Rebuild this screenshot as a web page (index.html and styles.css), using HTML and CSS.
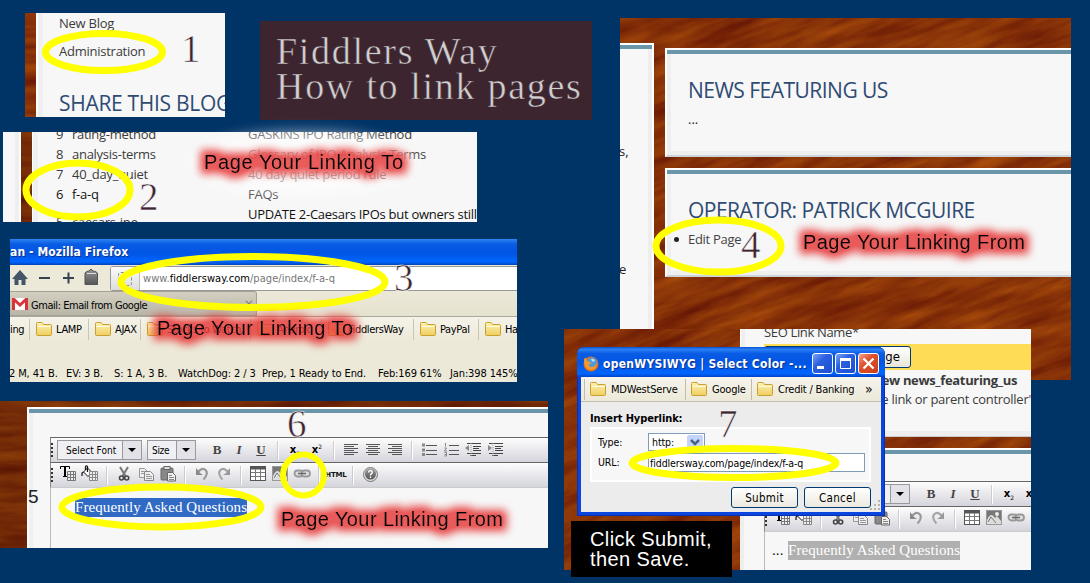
FILE: index.html
```html
<!DOCTYPE html>
<html lang="en">
<head>
<meta charset="utf-8">
<title>Fiddlers Way - How to link pages</title>
<link rel="stylesheet" href="styles.css">
</head>
<body>
<svg class="defs" width="0" height="0">
  <defs>
    <filter id="grain" x="0" y="0" width="100%" height="100%" color-interpolation-filters="sRGB">
      <feTurbulence type="fractalNoise" baseFrequency="0.014 0.08" numOctaves="5" seed="8" result="n"/>
      <feColorMatrix in="n" values="0.32 0 0 0 0.37  0.26 0 0 0 0.065  0.03 0 0 0 0.015  0 0 0 0 1"/>
    </filter>
    <filter id="glow" x="-15%" y="-120%" width="130%" height="340%" color-interpolation-filters="sRGB">
      <feMorphology in="SourceAlpha" operator="dilate" radius="5" result="d"/>
      <feGaussianBlur in="d" stdDeviation="4.2" result="b"/>
      <feComponentTransfer in="b" result="c"><feFuncA type="linear" slope="1.15"/></feComponentTransfer>
      <feFlood flood-color="#e63c3c" flood-opacity=".84"/>
      <feComposite in2="c" operator="in" result="g"/>
      <feMerge><feMergeNode in="g"/><feMergeNode in="SourceGraphic"/></feMerge>
    </filter>
    <filter id="halo" x="-30%" y="-100%" width="160%" height="300%"><feGaussianBlur stdDeviation="7"/></filter>
    <linearGradient id="fold" x1="0" y1="0" x2="0" y2="1"><stop offset="0" stop-color="#fdf3b4"/><stop offset="1" stop-color="#efce5e"/></linearGradient>
    <linearGradient id="grey" x1="0" y1="0" x2="0" y2="1"><stop offset="0" stop-color="#999"/><stop offset="1" stop-color="#555"/></linearGradient>
    <symbol id="folder" viewBox="0 0 16 14"><path d="M.5 12.500V1.500Q.5.5 1.500.5H6L7.500 2.500H14.500Q15.500 2.500 15.500 3.500V12.500Q15.500 13.500 14.500 13.500H1.500Q.5 13.500.5 12.500Z" fill="url(#fold)" stroke="#c9a031"/><path d="M1.500 4.500H14.500" stroke="#fffbe0"/></symbol>
    <symbol id="tgrid" viewBox="0 0 22 22"><path d="M3.500 5V2.500H12.500V5M6 12.500H10" fill="none" stroke="#000"/><path d="M8 2V12" stroke="#000" stroke-width="2"/><path d="M10.500 7.500H18.500V16.500H10.500ZM10.500 10.500H18.500M10.500 13.500H18.500M13.500 7.500V16.500M16.500 7.500V16.500" fill="#eee" stroke="#777"/></symbol>
    <symbol id="bucket" viewBox="0 0 22 22"><path d="M4.500 8L8.500 4L13 8.500L9 12.500Z" fill="#fff" stroke="#111"/><path d="M8.500 8V2.500Q7.500 1 6.500 2.500V6M4.500 8L3 9V12" fill="none" stroke="#111" stroke-width="1.200"/><path d="M10.500 7.500H18.500V16.500H10.500ZM10.500 10.500H18.500M10.500 13.500H18.500M13.500 7.500V16.500M16.500 7.500V16.500" fill="#eee" stroke="#888"/></symbol>
    <symbol id="cut" viewBox="0 0 22 22"><path d="M7 3L12.500 12M15 3L9.500 12" stroke="#777" stroke-width="2"/><circle cx="8.500" cy="14" r="2" fill="none" stroke="#444" stroke-width="1.600"/><circle cx="13.700" cy="14" r="2" fill="none" stroke="#444" stroke-width="1.600"/></symbol>
    <symbol id="copy" viewBox="0 0 22 22"><path d="M4.500 4.500H9.500L12.500 7.500V13.500H4.500Z" fill="#eee" stroke="#999"/><path d="M9.500 7.500H15.500L18.500 10.500V16.500H9.500Z" fill="#eee" stroke="#888"/><path d="M6 7.500H9M6 9.500H9M11 10.500H15M11 12.500H17M11 14.500H17" stroke="#999"/></symbol>
    <symbol id="paste" viewBox="0 0 22 22"><rect x="4" y="4" width="12" height="12" rx="1" fill="#888" stroke="#666"/><rect x="7" y="2.500" width="6" height="3" fill="#ddd" stroke="#666"/><path d="M10.500 8.500H15.500L18.500 11.500V17H10.500Z" fill="#eee" stroke="#666"/><path d="M12 11.500H15M12 13.500H17M12 15.500H17" stroke="#888"/></symbol>
    <symbol id="undo" viewBox="0 0 22 22"><path d="M6 9Q11 2.500 15 6.500Q17.500 10 12.500 15.500" fill="none" stroke="#999" stroke-width="2.200"/><path d="M5 4V11H12L9 9Z" fill="#888"/></symbol>
    <symbol id="redo" viewBox="0 0 22 22"><path d="M16 9Q11 2.500 7 6.500Q4.500 10 9.500 15.500" fill="none" stroke="#a5a5a5" stroke-width="2.200"/><path d="M17 4V11H10L13 9Z" fill="#999"/></symbol>
    <symbol id="table" viewBox="0 0 22 22"><rect x="3.500" y="2.500" width="15" height="14" fill="#fff" stroke="#555"/><path d="M4 4H18" stroke="#555" stroke-width="3"/><path d="M4 8.500H18M4 12.500H18M8.500 5V16M13.500 5V16" stroke="#777"/></symbol>
    <symbol id="image" viewBox="0 0 22 22"><rect x="3.500" y="2.500" width="15" height="14" fill="#777" stroke="#999"/><path d="M4 12Q8 3 12 10L14 8L18 13V16H4Z" fill="#ddd"/><circle cx="14" cy="6" r="2" fill="#eee"/><path d="M5 14L8 9L13 15" stroke="#777" fill="none"/></symbol>
    <symbol id="link" viewBox="0 0 22 22"><rect x="3.500" y="6.500" width="8.500" height="6" rx="3" fill="#ddd" stroke="#999" stroke-width="1.800"/><rect x="10.500" y="6.500" width="8.500" height="6" rx="3" fill="#ddd" stroke="#999" stroke-width="1.800"/><path d="M7 9.500H15" stroke="#666" stroke-width="1.500"/></symbol>
    <symbol id="help" viewBox="0 0 22 22"><circle cx="11.500" cy="10.500" r="7" fill="#ddd" stroke="#777"/><circle cx="11.500" cy="10" r="5.500" fill="url(#grey)"/><path d="M9.500 8.500Q9.800 6.500 11.500 6.600Q14 7 13 9.200Q11.500 10 11.500 11.500M11.500 12.500V14" fill="none" stroke="#fff" stroke-width="1.500"/></symbol>
    <symbol id="left" viewBox="0 0 22 22"><path d="M4 5.500H18M4 7.500H14M4 9.500H18M4 11.500H14M4 13.500H18M4 15.500H14" stroke="#555"/></symbol>
    <symbol id="center" viewBox="0 0 22 22"><path d="M4 5.500H18M6 7.500H16M4 9.500H18M6 11.500H16M4 13.500H18M6 15.500H16" stroke="#555"/></symbol>
    <symbol id="right" viewBox="0 0 22 22"><path d="M4 5.500H18M8 7.500H18M4 9.500H18M8 11.500H18M4 13.500H18M8 15.500H18" stroke="#555"/></symbol>
    <symbol id="ul" viewBox="0 0 22 22"><path d="M8 6.500H19M8 11.500H19M8 15.500H19" stroke="#555"/><path d="M4 4.500H7V7.500H4ZM4 9.500H7V12.500H4ZM4 14H7V17H4Z" fill="#888"/></symbol>
    <symbol id="ol" viewBox="0 0 22 22"><path d="M9 6.500H19M9 11.500H19M9 15.500H19" stroke="#555"/><path d="M5.500 4V7.500M4.500 9H6.500L4.500 12H7M4.500 13.500H6.500V17H4.500M4.500 15.500H6.500" stroke="#888" fill="none"/></symbol>
    <symbol id="outdent" viewBox="0 0 22 22"><path d="M5 4.500H19M11 7.500H19M11 9.500H17M11 11.500H19M5 14.500H19M8 16.500H14" stroke="#444"/><path d="M9 4V17" stroke="#999" stroke-dasharray="1 1"/><path d="M7 6V12L3 9Z" fill="#888"/></symbol>
    <symbol id="indent" viewBox="0 0 22 22"><path d="M5 4.500H19M11 7.500H19M11 9.500H17M11 11.500H19M5 14.500H19M8 16.500H14" stroke="#444"/><path d="M9 4V17" stroke="#999" stroke-dasharray="1 1"/><path d="M4 6V12L8 9Z" fill="#888"/></symbol>
  </defs>
</svg>

<main class="canvas">
  <section class="clip clip-panels">
    <svg class="wood"><rect x="-250" y="-220" width="1000" height="900" transform="rotate(-20 200 200)" filter="url(#grain)"/></svg>
    <div class="col-left"><p>s,</p><p>e</p></div>
    <div class="col-right">
      <div class="panel box"><h2>NEWS FEATURING US</h2><p>...</p></div>
      <div class="panel box"><h2>OPERATOR: PATRICK MCGUIRE</h2><p class="item">Edit Page</p></div>
    </div>
  </section>

  <section class="clip clip-blog">
    <svg class="wood"><rect x="-300" y="-100" width="700" height="400" filter="url(#grain)"/></svg>
    <div class="blog-panel">
      <p>New Blog</p>
      <p>Administration</p>
      <h2>SHARE THIS BLOG</h2>
    </div>
  </section>

  <header class="title">Fiddlers Way<br>How to link pages</header>

  <section class="clip clip-list">
    <svg class="wood dim"><rect x="-60" y="-300" width="500" height="500" filter="url(#grain)"/></svg>
    <div class="edge"></div>
    <div class="list-panel">
      <ol class="slugs">
        <li><b>9</b>rating-method</li>
        <li><b>8</b>analysis-terms</li>
        <li><b>7</b>40_day_quiet</li>
        <li class="dark"><b>6</b>f-a-q</li>
        <li class="low"><b>5</b>caesars-ipo</li>
      </ol>
      <ul class="names">
        <li>GASKINS IPO Rating Method</li>
        <li>Glossary of IPO Analysis Terms</li>
        <li>40 day quiet period rule</li>
        <li>FAQs</li>
        <li class="dark">UPDATE 2-Caesars IPOs but owners still</li>
      </ul>
    </div>
  </section>

  <section class="clip clip-browser">
    <div class="ff-title">an - Mozilla Firefox</div>
    <div class="ff-nav">
      <svg width="100" height="26"><path d="M2 14L10 5L18 14H15.500V20H11.500V15H8.500V20H4.500V14Z" fill="#445566"/><path d="M29 13H40M53 13H64M58.500 7.500V18.500" stroke="#34434f" stroke-width="2"/><path d="M75 8Q76 6 79 6L81 4L83 6Q86 6 87.500 8V19.500H75Z" fill="url(#grey)" stroke="#555"/><path d="M77 8.500H86" stroke="#ddd"/></svg>
      <div class="ff-url"><span class="ff-id"><i></i></span><span class="ff-addr">www.<b>fiddlersway.com</b>/page/index/f-a-q</span></div>
    </div>
    <div class="ff-tabs"><div class="ff-tab">
      <svg width="16" height="12"><rect width="16" height="12" rx="1" fill="#fff"/><path d="M1.500 12V1L8 7L14.500 1V12" fill="none" stroke="#d9343a" stroke-width="3"/></svg>
      <span>Gmail: Email from Google</span><em>×</em></div></div>
    <div class="ff-marks">
      <span>ing</span>
      <span><svg><use href="#folder"/></svg>LAMP</span>
      <span><svg><use href="#folder"/></svg>AJAX</span>
      <span><svg><use href="#folder"/></svg>Stocks to Watch</span>
      <span><svg><use href="#folder"/></svg>Android</span>
      <span><svg><use href="#folder"/></svg>FiddlersWay</span>
      <span><svg><use href="#folder"/></svg>PayPal</span>
      <span><svg><use href="#folder"/></svg>Ha</span>
    </div>
    <div class="ff-status"><span>2 M, 41 B.</span><span>EV: 3 B.</span><span>S: 1 A, 3 B.</span><span>WatchDog: 2 / 3</span><span>Prep, 1 Ready to End.</span><span>Feb:169 61%</span><span>Jan:398 145%</span></div>
  </section>

  <section class="clip clip-editor">
    <svg class="wood dim"><rect x="-100" y="-40" width="700" height="300" filter="url(#grain)"/></svg>
    <div class="panel editor-panel">
      <div class="editor">
        <div class="bar">
          <i class="grip"></i>
          <span class="pick pick-font">Select Font<i></i></span><span class="pick pick-size">Size<i></i></span>
          <b class="fmt">B</b><b class="fmt it">I</b><b class="fmt un">U</b><i class="sep"></i>
          <b class="sx">x<sub>2</sub></b><b class="sx">x<sup>2</sup></b><i class="sep"></i>
          <svg><use href="#left"/></svg><svg><use href="#center"/></svg><svg><use href="#right"/></svg><i class="sep"></i>
          <svg><use href="#ul"/></svg><svg><use href="#ol"/></svg><svg><use href="#outdent"/></svg><svg><use href="#indent"/></svg>
        </div>
        <div class="bar">
          <i class="grip"></i>
          <svg><use href="#tgrid"/></svg><svg><use href="#bucket"/></svg><i class="sep"></i>
          <svg><use href="#cut"/></svg><svg><use href="#copy"/></svg><svg><use href="#paste"/></svg><i class="sep"></i>
          <svg><use href="#undo"/></svg><svg><use href="#redo"/></svg><i class="sep"></i>
          <svg><use href="#table"/></svg><svg><use href="#image"/></svg><svg><use href="#link"/></svg><i class="sep"></i>
          <b class="html">HTML</b><i class="sep"></i><svg><use href="#help"/></svg>
        </div>
        <p class="doc"><mark class="on">Frequently Asked Questions</mark></p>
      </div>
    </div>
  </section>

  <section class="clip clip-save">
    <svg class="wood"><rect x="-300" y="-260" width="1000" height="900" transform="rotate(-24 200 200)" filter="url(#grain)"/></svg>
    <div class="save-col">
      <div class="save-top">
        <p class="seo">SEO Link Name*</p>
        <div class="yellow"><span>Save Page</span></div>
        <p class="news">view news_featuring_us</p>
        <p class="ctl">the link or parent controller<q>'</q></p>
      </div>
      <div class="panel save-bottom">
        <div class="editor">
          <div class="bar">
            <i class="grip"></i>
            <span class="pick pick-font">Select Font<i></i></span><span class="pick pick-size">Size<i></i></span>
            <b class="fmt">B</b><b class="fmt it">I</b><b class="fmt un">U</b><i class="sep"></i>
            <b class="sx">x<sub>2</sub></b><b class="sx">x<sup>2</sup></b>
          </div>
          <div class="bar">
            <i class="grip"></i>
            <svg><use href="#tgrid"/></svg><svg><use href="#bucket"/></svg><i class="sep"></i>
            <svg><use href="#cut"/></svg><svg><use href="#copy"/></svg><svg><use href="#paste"/></svg><i class="sep"></i>
            <svg><use href="#undo"/></svg><svg><use href="#redo"/></svg><i class="sep"></i>
            <svg><use href="#table"/></svg><svg><use href="#image"/></svg><svg><use href="#link"/></svg>
          </div>
          <p class="doc faded"><span>...</span><mark>Frequently Asked Questions</mark></p>
        </div>
      </div>
    </div>
  </section>

  <section class="dialog">
    <div class="dlg-title">
      <svg width="16" height="16"><circle cx="8" cy="8" r="7.500" fill="#e2701c"/><circle cx="9" cy="6.500" r="5" fill="#4b9be0"/><path d="M1 3Q1 15 9 14Q14 13 13.500 7Q12 11 8 11Q5 10 6 8L8.500 7.500Q7 5 4.500 5.500Q3 4 3 1.500Z" fill="#f39a2c"/><path d="M8 3Q11 2 12 5Q10 6 9 5Z" fill="#bfe2fa"/></svg>
      <span>openWYSIWYG | Select Color -...</span>
      <i class="wb"><svg width="19" height="19"><path d="M4 13.500H11" stroke="#fff" stroke-width="3"/></svg></i>
      <i class="wb"><svg width="19" height="19"><path d="M4.500 6H14.500V14.500H4.500Z" fill="none" stroke="#fff"/><path d="M4 5.500H15" stroke="#fff" stroke-width="3"/></svg></i>
      <i class="wb close"><svg width="19" height="19"><path d="M4.500 4.500L14.500 14.500M14.500 4.500L4.500 14.500" stroke="#fff" stroke-width="2.300"/></svg></i>
    </div>
    <div class="dlg-marks">
      <span><svg><use href="#folder"/></svg>MDWestServe</span>
      <span><svg><use href="#folder"/></svg>Google</span>
      <span><svg><use href="#folder"/></svg>Credit / Banking</span>
      <em>»</em>
    </div>
    <div class="dlg-body">
      <h3>Insert Hyperlink:</h3>
      <div class="fields">
        <label>Type:</label><span class="select">http:<i><svg width="14" height="14"><path d="M3 5L7 9L11 5" fill="none" stroke="#4d6185" stroke-width="2.500"/></svg></i></span>
        <label>URL:</label><span class="input">fiddlersway.com/page/index/f-a-q</span>
      </div>
      <div class="buttons"><span>Submit</span><span>Cancel</span></div>
    </div>
    <svg class="size-grip" width="12" height="12"><path d="M9 1H11M5 5H7M9 5H11M1 9H3M5 9H7M9 9H11" stroke="#b8b4a2" stroke-width="2"/></svg>
  </section>

  <div class="note">Click Submit,<br>then Save.</div>

  <svg class="marks" width="1090" height="583">
    <ellipse cx="303" cy="163" rx="112" ry="31" fill="#fff" opacity=".6" filter="url(#halo)"/>
    <g fill="none" stroke="#ff0" stroke-width="7">
      <ellipse cx="104" cy="52" rx="58.500" ry="18.500"/>
      <ellipse cx="78" cy="190" rx="52" ry="27"/>
      <ellipse cx="253" cy="282" rx="132" ry="25.500"/>
      <ellipse cx="718.500" cy="246" rx="62.500" ry="26"/>
      <ellipse cx="161.500" cy="507" rx="99.500" ry="20"/>
      <circle cx="303.500" cy="475" r="20.500" stroke-width="6"/>
      <ellipse cx="734" cy="463" rx="102" ry="14.500"/>
    </g>
    <g class="digits">
      <text x="181" y="62">1</text><text x="139" y="210">2</text><text x="394" y="291">3</text><text x="741" y="258">4</text><text x="287" y="437">6</text><text x="718" y="437">7</text>
    </g>
    <g class="labels">
      <text class="plain" x="28" y="503" textLength="12">5</text>
      <text x="204" y="169" textLength="199" filter="url(#glow)">Page Your Linking To</text>
      <text x="157" y="335" textLength="196" filter="url(#glow)">Page Your Linking To</text>
      <text x="281" y="526" textLength="222" filter="url(#glow)">Page Your Linking From</text>
      <text x="803" y="249" textLength="222" filter="url(#glow)">Page Your Linking From</text>
    </g>
  </svg>
</main>
</body>
</html>
```
FILE: styles.css
```css
* { box-sizing: border-box; }
body, p, h2, h3, ol, ul { margin: 0; padding: 0; }
ol, ul { list-style: none; }
i, em { font-style: normal; }
.defs { position: absolute; }

.canvas {
  position: relative;
  width: 1090px;
  height: 583px;
  overflow: hidden;
  background: #003366;
  font-family: "Open Sans", "Noto Sans", sans-serif;
  font-size: 13px;
  color: #3b3b3b;
}
.clip { position: absolute; overflow: hidden; background: #7a2a08; }
.wood { position: absolute; left: 0; top: 0; width: 100%; height: 100%; }
.dim { filter: brightness(.85); }
.clip > div { position: relative; }
h2 { font-weight: 400; font-size: 21px; line-height: 28px; letter-spacing: -.52px; color: #2f4b73; white-space: nowrap; }

.panel {
  background: #f7f7f7;
  border: solid #fff;
  border-width: 2px 0 1px 2px;
}
.panel::before { content: ""; display: block; height: 4px; background: #6b96aa; }

/* blog menu */
.clip-blog { left: 25px; top: 13px; width: 200px; height: 104px; }
.blog-panel { margin-left: 11px; height: 104px; padding-left: 21px; border-left: 2px solid #fff; background: #f7f7f7; box-shadow: inset 5px 0 #f0f0f0; }
.blog-panel p { line-height: 28px; letter-spacing: -.25px; }
.blog-panel p:first-child { line-height: 20px; height: 24px; }
.blog-panel h2 { margin-top: 24px; letter-spacing: -.3px; }

.title {
  position: absolute; left: 260px; top: 21px; width: 332px; height: 99px;
  padding: 13px 0 0 16px;
  background: #3d2530; color: #d0d0d0;
  font: 38px/35px "Liberation Serif", serif;
  letter-spacing: 1.7px; white-space: nowrap;
  -webkit-text-stroke: .5px #3d2530;
}

/* page list */
.clip-list { left: 3px; top: 132px; width: 474px; height: 90px; display: flex; }
.edge { width: 18px; background: #f7f7f7; border-right: 2px solid #fff; box-shadow: inset -4px 0 #eee; }
.list-panel { margin-left: 11px; flex: 1; display: flex; height: 90px; padding-left: 23px; border-left: 1px solid #fff; background: #f7f7f7; box-shadow: inset 5px 0 #f0f0f0; }
.list-panel ol, .list-panel ul { margin-top: -8px; }
.list-panel li { height: 20px; line-height: 20px; white-space: nowrap; letter-spacing: -.27px; }
.list-panel b { display: inline-block; width: 16px; font-weight: 400; }
.slugs { width: 192px; }
.low { padding-top: 8px; }
.list-panel .dark { color: #111; }

/* browser window */
.clip-browser { left: 10px; top: 239px; width: 507px; height: 143px; background: #ece9d8; font: 11px "DejaVu Sans Condensed", "DejaVu Sans", sans-serif; color: #000; white-space: nowrap; }
.ff-title { height: 26px; line-height: 27px; background: linear-gradient(#2a86f0, #0a5be4 20%, #0055e5 55%, #0066ff 88%, #0042b8); color: #fff; font-weight: 700; font-size: 12px; letter-spacing: .1px; text-shadow: 1px 1px #0b2f8a; }
.ff-nav { display: flex; height: 26px; }
.ff-url { flex: 1; display: flex; height: 25px; margin-top: 1px; border: 1px solid #999; border-right: 0; border-radius: 3px 0 0 3px; background: #fff; }
.ff-id { width: 29px; border-right: 1px solid #bbb; background: linear-gradient(#fbfbfb, #ddd); padding: 5px 0 0 7px; }
.ff-id i { display: block; width: 14px; height: 14px; border: 1px dashed #888; border-radius: 3px; }
.ff-addr { margin-left: 3px; line-height: 24px; color: #777; letter-spacing: .05px; }
.ff-addr b { font-weight: 400; color: #000; }
.ff-tabs { height: 26px; border-bottom: 1px solid #aca899; background: linear-gradient(#ece9d8, #e6e2d0); }
.ff-tab { display: flex; align-items: center; gap: 3px; width: 247px; height: 25px; padding-left: 2px; border: 1px solid #a5a294; border-left: 0; border-radius: 0 3px 0 0; background: linear-gradient(#d3d0c2, #b9b6a8); letter-spacing: -.45px; }
.ff-tab span { width: 210px; padding-top: 3px; }
.ff-tab em { color: #777; font-size: 13px; }
.ff-marks { display: grid; grid-template-columns: 19px 59px 52px 110px 71px 92px 65px 50px; height: 24px; background: linear-gradient(#f5f3e9, #ece9d8); align-items: center; letter-spacing: -.35px; }
.ff-marks span { display: flex; align-items: center; gap: 4px; height: 21px; }
.ff-marks span + span { padding-left: 6px; border-left: 1px solid #c8c5b4; }
.ff-marks svg, .dlg-marks svg { width: 16px; height: 14px; flex: none; }
.ff-status { display: grid; grid-template-columns: 57px 48px 64px 84px 116px 72px 80px; margin-top: 25px; line-height: 16px; letter-spacing: -.12px; margin-left: -1px; }

/* editor */
.clip-editor { left: 0; top: 401px; width: 548px; height: 147px; padding: 6px 0 0 27px; }
.editor-panel { height: 150px; padding-left: 21px; box-shadow: inset 4px 0 #f0f0f0; }
.editor-panel::before { margin-left: -21px; }
.editor-panel .editor { margin-top: 24px; }
.editor { height: 150px; border-left: 1px solid #bbb; }
.bar { display: flex; height: 25px; margin-left: -1px; border-top: 1px solid #666; border-left: 1px solid #888; background: linear-gradient(#fdfdfd, #d4d4dc); align-items: center; }
.bar + .bar { height: 26px; border-bottom: 1px solid #ccc; }
.bar svg { width: 22px; height: 22px; flex: none; }
.grip { width: 2px; height: 14px; margin: 0 4px 0 0; background: repeating-linear-gradient(#333 0 2px, transparent 2px 4px); flex: none; }
.pick { display: flex; height: 20px; border: 1px solid #999; font: 10px/19px "DejaVu Sans Condensed", "DejaVu Sans", sans-serif; color: #000; flex: none; padding-left: 8px; background: #f0f0f4; }
.pick-font { width: 85px; letter-spacing: 0; }
.pick-size { width: 49px; margin: 0 10px 0 5px; padding-left: 4px; letter-spacing: -.3px; }
.pick i { width: 19px; margin-left: auto; border-left: 1px solid #999; background: #e2e2e8; display: flex; justify-content: center; align-items: center; }
.pick i::after { content: ""; border: solid transparent; border-width: 4px 4px 0; border-top-color: #000; }
.fmt { width: 22px; text-align: center; flex: none; font: bold 13px "Liberation Serif", serif; color: #444; }
.it { font-style: italic; }
.un { text-decoration: underline; }
.sep { width: 2px; height: 19px; margin: 0 5px; background: #fff; border-left: 1px solid #ccc; flex: none; }
.sx { width: 22px; text-align: center; flex: none; font: bold 10px/20px "DejaVu Sans", sans-serif; color: #000; }
.sx sub, .sx sup { font-size: 6px; line-height: 0; font-weight: 400; }
.html { width: 22px; flex: none; font: bold 7px "DejaVu Sans", sans-serif; color: #111; letter-spacing: -.2px; display: flex; justify-content: center; }
.doc { padding: 10px 0 0 24px; font: 15px/19px "Liberation Serif", serif; white-space: nowrap; letter-spacing: .08px; }
.doc mark { display: inline-block; height: 19px; color: #fff; background: #b0b0b0; }
.doc .on { background: #316ac5; }
.faded { padding: 9px 0 0 7px; color: #222; }
.faded span { display: inline-block; width: 16px; }

/* page panels */
.clip-panels { left: 620px; top: 18px; width: 451px; height: 362px; display: flex; }
.col-left { width: 34px; height: 330px; margin-top: 25px; background: #f7f7f7; border: solid #fff; border-width: 2px 2px 0 0; box-shadow: inset -4px 0 #eee; color: #222; }
.col-left::before { content: ""; display: block; height: 4px; background: #6b96aa; }
.col-left p { height: 118px; line-height: 20px; margin-left: -1px; }
.col-left p:nth-child(1) { margin-top: 92px; }
.col-right { margin: 30px 0 0 11px; flex: 1; display: flex; flex-direction: column; gap: 11px; }
.box { height: 109px; box-shadow: inset 4px -4px #efefef; border-bottom: 2px solid #ccd6da; }
.box h2 { margin: 22px 0 0 21px; }
.box p { margin: 5px 0 0 21px; line-height: 20px; color: #222; }
.box .item { position: relative; color: #444; letter-spacing: -.3px; }
.item::before { content: ""; position: absolute; left: -14px; top: 8px; width: 5px; height: 5px; border-radius: 50%; background: #222; }

/* save form */
.clip-save { left: 564px; top: 329px; width: 467px; height: 241px; }
.save-col { margin-left: 176px; white-space: nowrap; }
.save-top { height: 108px; overflow: hidden; background: #f7f7f7; border-left: 1px solid #fff; border-bottom: 1px solid #ccc; padding-left: 23px; box-shadow: inset 4px -5px #eee; }
.seo { margin-top: -7px; line-height: 20px; height: 22px; letter-spacing: -.35px; }
.yellow { height: 26px; padding-top: 2px; background: #ffdc55; }
.yellow span { display: block; width: 147px; height: 22px; padding-right: 10px; text-align: right; border: 1px solid #003c74; border-radius: 3px; background: linear-gradient(#fff, #e8e6da); font: 13px/20px "DejaVu Sans Condensed", "DejaVu Sans", sans-serif; color: #000; }
.news, .ctl { width: 253px; text-align: right; line-height: 20px; font-weight: 700; letter-spacing: -.35px; }
.ctl { width: 267px; margin-top: -1px; font-weight: 400; letter-spacing: -.28px; }
.ctl q { quotes: none; color: #b03030; }
.save-bottom { margin-top: 11px; height: 130px; padding-left: 23px; border-left-width: 0; box-shadow: inset 4px 0 #eee; }
.save-bottom::before { margin-left: -24px; }
.save-bottom .editor { margin-top: 27px; margin-left: 1px; }

/* dialog */
.dialog { position: absolute; left: 577px; top: 347px; width: 308px; height: 169px; padding: 0 4px 4px; border-radius: 7px 7px 0 0; background: #0a46dd; box-shadow: inset 0 0 0 1px #0831b0; color: #000; font: 11px "DejaVu Sans Condensed", "DejaVu Sans", sans-serif; white-space: nowrap; }
.dlg-title { display: flex; align-items: center; height: 30px; margin: 0 -4px; padding: 3px 6px 0; border-radius: 7px 7px 0 0; background: linear-gradient(#0a50d0, #2a80f5 8%, #0a5be4 22%, #0055e5 55%, #0066ff 88%, #0042c8); }
.dlg-title span { width: 207px; margin-left: 4px; color: #fff; font-weight: 700; font-size: 12px; letter-spacing: .27px; text-shadow: 1px 1px #0b2f8a; }
.dlg-title > svg { flex: none; }
.wb { flex: none; width: 21px; height: 21px; margin-left: 2px; border: 1px solid #fff; border-radius: 3px; background: linear-gradient(135deg, #7ba5f5, #2a5fe0 40%, #1c4fd0); }
.wb svg { display: block; }
.close { background: linear-gradient(135deg, #f0a088, #e0502c 40%, #c8401c); }
.dlg-marks { display: grid; grid-template-columns: 101px 66px 114px 12px; align-items: center; height: 25px; padding-left: 3px; border-bottom: 1px solid #c0bdae; background: linear-gradient(#f6f4ec, #ece9d8); letter-spacing: -.2px; }
.dlg-marks span { display: flex; align-items: center; gap: 5px; height: 21px; padding-left: 5px; border-left: 1px solid #c0bdae; }
.dlg-marks em { font-size: 14px; line-height: 14px; }
.dlg-body { height: 110px; padding: 9px 9px 0; background: #ececec; }
.dlg-body h3 { font: bold 11px/16px "DejaVu Sans Condensed", "DejaVu Sans", sans-serif; letter-spacing: -.1px; }
.fields { display: grid; grid-template-columns: 50px 1fr; grid-auto-rows: 20px; width: 281px; height: 55px; padding: 4px 6px; border: 2px solid #fff; background: #f7f7f7; font-size: 10.5px; line-height: 18px; letter-spacing: -.1px; }
.select { display: flex; width: 57px; height: 18px; border: 1px solid #7f9db9; background: #fff; padding-left: 3px; line-height: 17px; }
.select i { width: 16px; margin: 1px 1px 1px auto; border-radius: 2px; background: #c3d3fb; }
.select i svg { display: block; margin: 0 1px; }
.input { width: 217px; height: 19px; border: 1px solid #7f9db9; background: #fff; padding-left: 1px; line-height: 18px; letter-spacing: -.1px; }
.buttons { display: flex; gap: 6px; margin: 5px 0 0 141px; }
.buttons span { width: 67px; height: 21px; border: 1px solid #003c74; border-radius: 3px; background: linear-gradient(#fff, #ebe9df); text-align: center; line-height: 20px; font-size: 11.5px; letter-spacing: .3px; }
.size-grip { position: absolute; right: 4px; bottom: 4px; }

.note { position: absolute; left: 571px; top: 521px; width: 161px; height: 56px; padding: 8px 0 0 19px; background: #000; color: #fff; font: 20px/20px "Liberation Sans", sans-serif; letter-spacing: .4px; white-space: nowrap; }

/* annotations */
.marks { position: absolute; left: 0; top: 0; }
.digits { font: 39px "Liberation Serif", serif; fill: #3d2530; stroke: #f7f7f7; stroke-width: .6px; }
.labels { font: 20px "Liberation Sans", sans-serif; fill: #000; stroke: #e86464; stroke-width: .15px; }
.labels .plain { font-size: 19px; fill: #222; stroke: none; }
```
